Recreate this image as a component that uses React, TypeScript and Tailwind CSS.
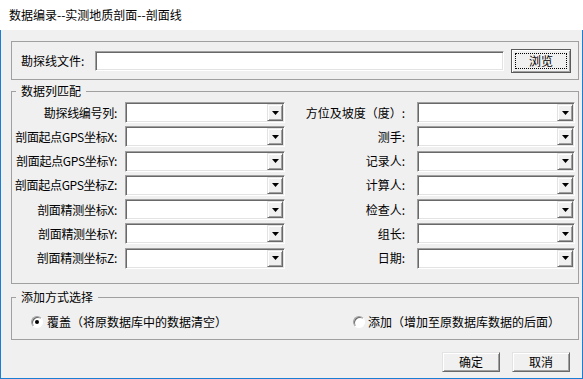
import React from "react";

const leftRows = [
  "勘探线编号列:",
  "剖面起点GPS坐标X:",
  "剖面起点GPS坐标Y:",
  "剖面起点GPS坐标Z:",
  "剖面精测坐标X:",
  "剖面精测坐标Y:",
  "剖面精测坐标Z:",
];

const rightRows = ["方位及坡度（度）:", "测手:", "记录人:", "计算人:", "检查人:", "组长:", "日期:"];

const sunken =
  "border border-t-[#a0a0a0] border-l-[#a0a0a0] border-r-white border-b-white bg-white shadow-[inset_1px_1px_0_#696969,inset_-1px_-1px_0_#e3e3e3]";

const raised =
  "border border-t-[#e3e3e3] border-l-[#e3e3e3] border-r-[#696969] border-b-[#696969] bg-[#f0f0f0] shadow-[inset_1px_1px_0_#ffffff,inset_-1px_-1px_0_#a0a0a0]";

function Combo({ className }: { className: string }) {
  return (
    <div className={`flex h-[21px] justify-end p-[1px] ${sunken} ${className}`}>
      <div className={`flex w-[16px] items-center justify-center ${raised}`}>
        <svg width="7" height="4" viewBox="0 0 7 4">
          <polygon points="0,0 7,0 3.5,4" fill="#000" />
        </svg>
      </div>
    </div>
  );
}

function Radio({ checked }: { checked?: boolean }) {
  return (
    <span className="grid h-[12px] w-[12px] shrink-0 place-items-center rounded-full border border-t-[#a0a0a0] border-l-[#a0a0a0] border-r-white border-b-white bg-white shadow-[inset_1px_1px_0_#696969]">
      {checked && <span className="h-[4px] w-[4px] rounded-full bg-black" />}
    </span>
  );
}

function Group({ title, className, children }: { title: string; className: string; children: React.ReactNode }) {
  return (
    <div className={`relative ml-[10px] w-[568px] border border-[#a0a0a0] ${className}`}>
      <span className="absolute -top-[9px] left-[4px] bg-[#f0f0f0] px-[5px] leading-[16px]">{title}</span>
      {children}
    </div>
  );
}

function Button({ label, className }: { label: string; className: string }) {
  return (
    <button className={`flex h-[20px] items-center justify-center ${raised} ${className}`}>{label}</button>
  );
}

export default function App() {
  return (
    <div className="flex h-[379px] w-[583px] flex-col font-['Noto_Sans_CJK_SC','Noto_Sans',sans-serif] text-[12px] text-black">
      <div className="flex h-[30px] shrink-0 items-center bg-white pl-[9px] text-[12px]">
        数据编录--实测地质剖面--剖面线
      </div>

      <div className="flex flex-1 flex-col border-x border-b border-[#1a7fd4] bg-[#f0f0f0]">
        {/* file */}
        <div className="ml-[10px] mt-[11px] flex h-[39px] w-[568px] items-center border border-[#a0a0a0] pl-[9px]">
          <span className="w-[74px] whitespace-nowrap">勘探线文件:</span>
          <div className={`h-[20px] w-[409px] ${sunken}`} />
          <button className="ml-auto mr-[7px] flex h-[24px] w-[60px] border border-[#5a5a5a] bg-[#f0f0f0] p-[3px] shadow-[inset_1px_1px_0_#ffffff,inset_-1px_-1px_0_#a0a0a0]">
            <span className="flex flex-1 items-center justify-center border border-dotted border-black leading-none">
              浏览
            </span>
          </button>
        </div>

        {/* columns */}
        <Group title="数据列匹配" className="mt-[11px] h-[193px]">
          <div className="flex flex-col gap-[3.3px] pt-[10px]">
            {leftRows.map((l, i) => (
              <div key={l} className="flex items-center">
                <span className="mr-[8px] w-[105px] whitespace-nowrap text-right tracking-[-0.3px]">{l}</span>
                <Combo className="w-[160px]" />
                <span className="mr-[12px] w-[120px] whitespace-nowrap text-right">{rightRows[i]}</span>
                <Combo className="w-[158px]" />
              </div>
            ))}
          </div>
        </Group>

        {/* mode */}
        <Group title="添加方式选择" className="mt-[13px] flex h-[43px] items-center pl-[19px] pr-[18px] pt-[6px]">
          <Radio checked />
          <span className="ml-[4px]">覆盖（将原数据库中的数据清空）</span>
          <span className="ml-auto">
            <Radio />
          </span>
          <span className="ml-[3px]">添加（增加至原数据库数据的后面）</span>
        </Group>

        <div className="mr-[12px] mt-[12px] flex justify-end gap-[12px]">
          <Button label="确定" className="w-[58px]" />
          <Button label="取消" className="w-[58px]" />
        </div>
      </div>
    </div>
  );
}
